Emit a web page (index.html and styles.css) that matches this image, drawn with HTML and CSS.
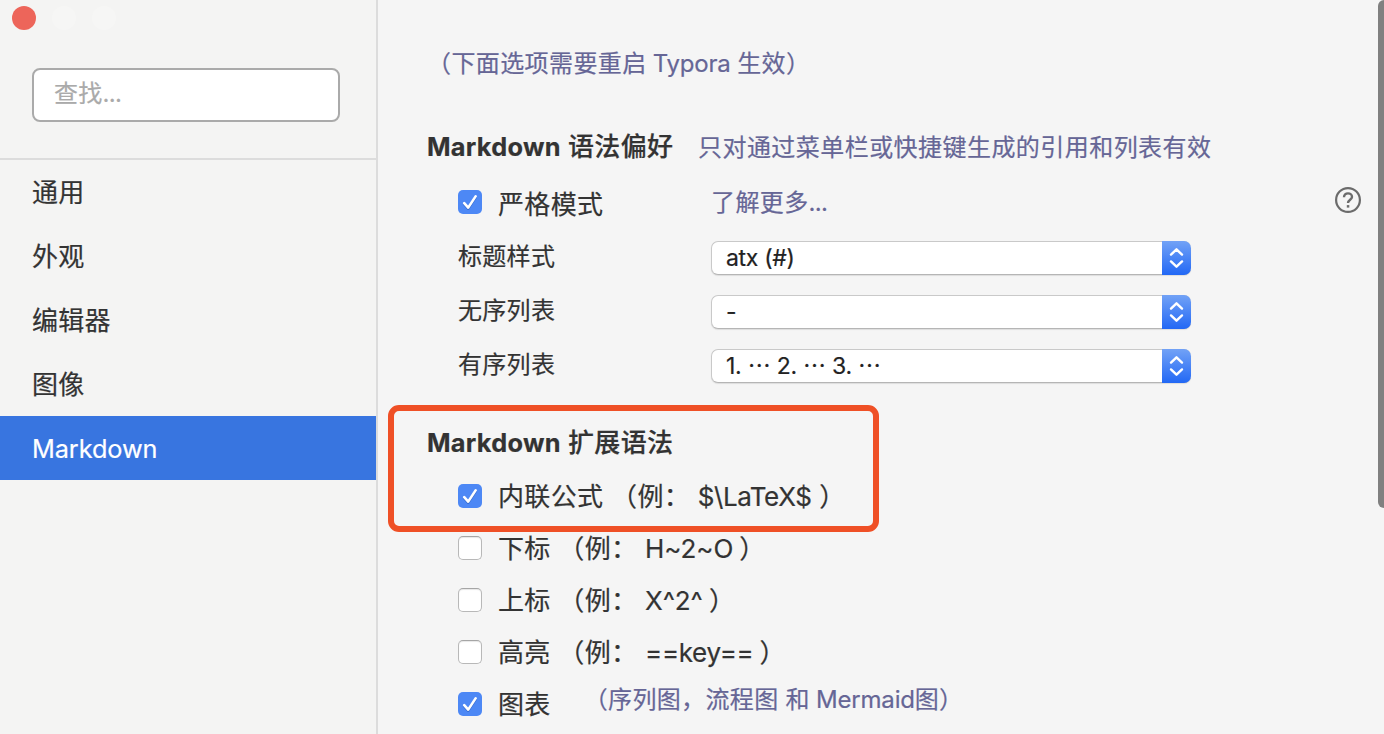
FILE: index.html
```
<!DOCTYPE html>
<html lang="zh-CN">
<head>
<meta charset="utf-8">
<title>Typora</title>
<link rel="stylesheet" href="styles.css">
</head>
<body>
<svg class="defs" width="0" height="0" aria-hidden="true">
  <symbol id="tick" viewBox="0 0 24 24"><path d="M6.2 13.1 10.2 17.6 17.6 6.4" fill="none" stroke="#fff" stroke-width="2.6" stroke-linecap="round" stroke-linejoin="round"/></symbol>
  <symbol id="arrows" viewBox="0 0 29 34"><path d="M9 13.6 14.5 8.3 20 13.6M9 20.4 14.5 25.7 20 20.4" fill="none" stroke="#fff" stroke-width="2.4" stroke-linecap="round" stroke-linejoin="round"/></symbol>
</svg>
<div class="window">
  <aside class="sidebar">
    <div class="top">
      <div class="lights"><i class="light close"></i><i class="light"></i><i class="light"></i></div>
      <div class="search">查找<span class="dots">...</span></div>
    </div>
    <nav class="nav">
      <div class="item">通用</div>
      <div class="item">外观</div>
      <div class="item">编辑器</div>
      <div class="item">图像</div>
      <div class="item active"><span class="latin">Markdown</span></div>
    </nav>
  </aside>
  <main class="main">
    <p class="hint restart">（下面选项需要重启 <span class="typora">Typora</span> 生效）</p>
    <div class="heading first"><h2><span class="bold">Markdown</span> 语法偏好</h2><span class="hint wide">只对通过菜单栏或快捷键生成的引用和列表有效</span></div>
    <div class="row strict">
      <div class="name"><span class="box on"><svg><use href="#tick"/></svg></span><span class="big">严格模式</span></div>
      <span class="hint more">了解更多<span class="dots">...</span></span>
      <svg class="help" viewBox="0 0 26 26"><circle cx="13" cy="13" r="11.9" fill="none" stroke="#6b6b6b" stroke-width="2.2"/><path d="M9 10.3C9 7.9 10.7 6.4 13 6.4S17 7.9 17 10C17 12.7 13 12.9 13 16.1" fill="none" stroke="#6b6b6b" stroke-width="2.4"/><path d="M11.8 18.1h2.5v2.5h-2.5z" fill="#6b6b6b"/></svg>
    </div>
    <div class="row"><span class="name small">标题样式</span><div class="select"><span class="value atx">atx (#)</span><svg class="stepper"><use href="#arrows"/></svg></div></div>
    <div class="row"><span class="name small">无序列表</span><div class="select"><span class="value">-</span><svg class="stepper"><use href="#arrows"/></svg></div></div>
    <div class="row"><span class="name small">有序列表</span><div class="select"><span class="value nums">1. ⋯ 2. ⋯ 3. ⋯</span><svg class="stepper"><use href="#arrows"/></svg></div></div>
    <div class="heading second"><h2><span class="bold">Markdown</span> 扩展语法</h2></div>
    <div class="check"><span class="box on"><svg><use href="#tick"/></svg></span><span class="big">内联公式 （例： <span class="sample latex">$\LaTeX$</span> ）</span></div>
    <div class="check"><span class="box"></span><span class="big">下标 （例： <span class="sample">H~2~O</span> <span class="shut">）</span></span></div>
    <div class="check"><span class="box"></span><span class="big">上标 （例： <span class="sample sup">X^2^</span> <span class="shut">）</span></span></div>
    <div class="check"><span class="box"></span><span class="big">高亮 （例： <span class="sample mark">==key==</span> <span class="shut">）</span></span></div>
    <div class="check"><span class="box on"><svg><use href="#tick"/></svg></span><span class="big">图表</span><span class="hint diagrams">（序列图，流程图 和 <span class="mermaid">Mermaid</span>图）</span></div>
  </main>
  <div class="callout"></div>
  <div class="scrollbar"></div>
</div>
</body>
</html>
```
FILE: styles.css
```
* { box-sizing: border-box; }
body { margin: 0; overflow: hidden; font-family: Inter, "Noto Sans CJK SC", sans-serif; font-size: 26px; color: #333; font-feature-settings: "calt" 0; -webkit-text-stroke: .2px currentColor; }
.defs { position: absolute; }
.window { position: relative; display: flex; width: 1384px; height: 734px; overflow: hidden; background: #f5f5f5; }
.sidebar { width: 378px; flex: none; background: #f4f4f3; border-right: 2px solid #dcdcdc; }
.top { height: 160px; border-bottom: 2px solid #dcdcdc; padding-top: 6px; }
.lights { display: flex; gap: 16px; padding-left: 12px; height: 24px; }
.light { width: 24px; height: 24px; border-radius: 50%; background: #f6f6f5; }
.light.close { background: #ed655a; }
.search { width: 308px; height: 54px; margin: 38px 0 0 32px; padding-left: 20px; border: 2px solid #aaa; border-radius: 8px; background: #fff; color: #aaa; font-size: 24px; line-height: 48px; letter-spacing: .3px; }
.dots { letter-spacing: -.7px; }
.item { height: 64px; line-height: 64px; padding: 1px 0 0 32px; letter-spacing: .3px; }
.item.active { background: #3875e0; color: #fff; }
.latin { font-size: 25.3px; letter-spacing: -.1px; }
.main { flex: 1; padding: 46px 0 0 49px; white-space: nowrap; }
.hint { margin: 0; font-size: 24px; letter-spacing: .4px; color: #666696; line-height: 36px; }
.restart { height: 83px; }
.typora { letter-spacing: -.2px; margin: 0 -.6px 0 -1px; }
.mermaid { letter-spacing: -.2px; margin-left: -1px; }
.heading { display: flex; height: 36px; line-height: 36px; }
h2 { margin: 0; width: 271px; font-size: 26px; line-height: 36px; font-weight: 500; letter-spacing: .3px; }
.bold { font-weight: 700; font-size: 25.3px; }
.first { margin-bottom: 12px; }
.wide { padding-top: 1px; letter-spacing: .45px; }
.row { display: flex; align-items: center; height: 54px; padding-left: 31px; }
.name { width: 253px; flex: none; display: flex; align-items: center; }
.small { font-size: 24px; letter-spacing: .3px; line-height: 36px; padding-bottom: 2px; }
.box { width: 24px; height: 24px; flex: none; margin: 0 16px 2px 0; border: 1px solid #b8b8b8; border-top-color: #a5a5a5; border-radius: 5px; background: #fff; box-shadow: inset 0 1px 1px #e7e7e7; }
.strict .box { margin-bottom: 4px; }
.strict .big { padding-top: 1px; }
.more { padding-bottom: 2px; }
.box.on { border: 0; background: #4d88f5; box-shadow: none; }
.box svg { display: block; width: 24px; height: 24px; filter: drop-shadow(0 1px 0 #3469cb); }
.big { line-height: 36px; letter-spacing: .35px; }
.shut { margin-left: -1.5px; }
.sample { letter-spacing: -.1px; }
.latex { letter-spacing: -.4px; }
.mark { letter-spacing: -.35px; }
.help { width: 26px; height: 26px; margin: 0 23px 9px auto; }
.select { display: flex; align-items: center; justify-content: space-between; width: 480px; height: 34px; padding-left: 14px; border: 1px solid #c9c9c9; border-bottom-color: #b5b5b5; border-right: 0; border-radius: 7px; background: #fff; box-shadow: 0 1px 1px #ddd; color: #222; font-size: 23px; line-height: 32px; }
.atx { letter-spacing: -.3px; }
.nums { letter-spacing: -.25px; }
.stepper { width: 29px; height: 34px; margin: -1px 0; border-radius: 0 7px 7px 0; background: linear-gradient(#72a2f6, #2268f5); }
.second { margin: 32px 0 10px; }
.check { display: flex; align-items: center; height: 52px; padding-left: 31px; }
.diagrams { margin-left: 33px; padding-bottom: 10px; letter-spacing: .35px; }
.callout { position: absolute; left: 388px; top: 405px; width: 491px; height: 127px; border: 6px solid #ef5026; border-radius: 11px; }
.scrollbar { position: absolute; left: 1378px; top: 0; width: 12px; height: 508px; border-radius: 6px; background: #808080; }
```
